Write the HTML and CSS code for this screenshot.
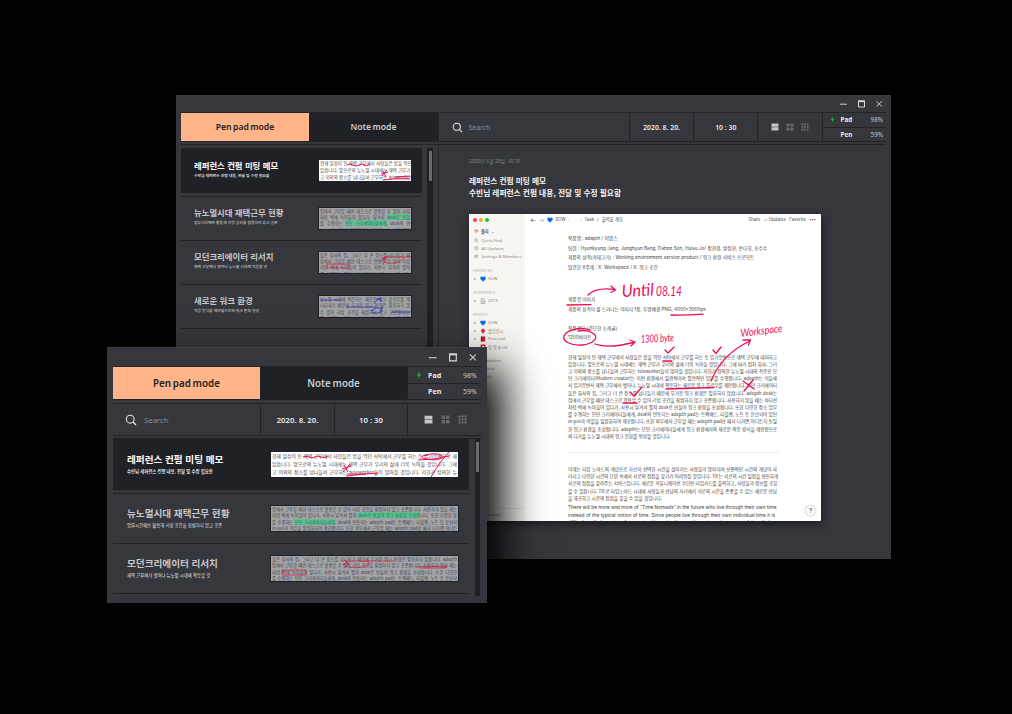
FILE: index.html
```html
<!DOCTYPE html>
<html lang="ko">
<head>
<meta charset="utf-8">
<title>adepth</title>
<link rel="stylesheet" href="styles.css">
</head>
<body>
<svg width="0" height="0" class="defs">
  <symbol id="search" viewBox="0 0 12 12"><circle cx="5.2" cy="5.2" r="3.9" fill="none" stroke="#e6e6e8" stroke-width="1.1"/><path d="M8 8l3 3" stroke="#e6e6e8" stroke-width="1.2"/></symbol>
  <symbol id="v1" viewBox="0 0 8 8"><path d="M.5.6h7v3.200H.5zM.5 4.300h7v3.200H.5z" fill="#c4c4c7"/></symbol>
  <symbol id="v2" viewBox="0 0 8 8"><path d="M.5.5h3.100v3.100H.5zM4.400.5h3.100v3.100H4.400zM.5 4.400h3.100v3.100H.5zM4.400 4.400h3.100v3.100H4.400z" fill="#66676b"/></symbol>
  <symbol id="v3" viewBox="0 0 8 8"><path d="M.5.5h1.700v1.700H.5zM3.150.5h1.700v1.700h-1.700zM5.800.5h1.700v1.700H5.800zM.5 3.150h1.700v1.700H.5zM3.150 3.150h1.700v1.700h-1.700zM5.800 3.150h1.700v1.700H5.800zM.5 5.800h1.700v1.700H.5zM3.150 5.800h1.700v1.700h-1.700zM5.800 5.800h1.700v1.700H5.800z" fill="#737478"/></symbol>
  <symbol id="bolt" viewBox="0 0 6 8"><path d="M3.600.3L.9 4.400h1.900L1.900 7.700 5.100 3.500H3.200z" fill="#12d012"/></symbol>
  <symbol id="ctl" viewBox="0 0 44 8"><path d="M0 4.200h7" stroke="#c8c8ca" stroke-width="1"/><path d="M18.500 1h6v6h-6z" fill="none" stroke="#d8d8da"/><path d="M18 1.300h7" stroke="#d8d8da" stroke-width="1.600"/><path d="M36.500 1.200l5.400 5.400M41.900 1.200l-5.400 5.400" stroke="#c8c8ca" stroke-width="1"/></symbol>
  <symbol id="heart" viewBox="0 0 6 6"><path d="M3 5.700L.4 2.900C-.4 1.200 1.700-.3 3 1.200 4.300-.3 6.400 1.200 5.600 2.900z" fill="#0a6cf0"/></symbol>
</svg>

<section class="window back">
  <header class="titlebar"><svg class="ctl"><use href="#ctl"/></svg></header>
  <div class="bar">
    <div class="tab active"><span>Pen pad mode</span></div>
    <div class="tab"><span>Note mode</span></div>
    <div class="cell search"><svg class="i12"><use href="#search"/></svg><span>Search</span></div>
    <div class="cell date">2020. 8. 20.</div>
    <div class="cell time">10 : 30</div>
    <div class="cell views"><svg><use href="#v1"/></svg><svg><use href="#v2"/></svg><svg><use href="#v3"/></svg></div>
    <div class="power">
      <div><svg><use href="#bolt"/></svg><b>Pad</b><span>98%</span></div>
      <div><b>Pen</b><span>59%</span></div>
    </div>
  </div>
  <div class="content">
    <div class="list">
      <article class="memo selected">
        <div class="txt"><h3>레퍼런스 컨펌 미팅 메모</h3><p>수빈님 레퍼런스 컨펌 내용, 전달 및 수정 필요함</p></div>
        <div class="thumb"><p>현재 일상이 된 재택 근무에서 사람들은 밥을 먹던</p><p>있습니다. 앞으로의 뉴노멀 시대에는 재택 근무가</p><p>고 이외의 장소를 넘나들며 근무하는 teleworker</p>
          <svg viewBox="0 0 92 21" class="ink"><path d="M28 5q3-2 6 0t6 0 5 0 6-1M62 14l7-2M64 11l3 6M68 10l-5 6M64 20q12-2 27-1M76 17l15-1"/></svg></div>
      </article>
      <article class="memo">
        <div class="txt"><h3>뉴노멀시대 재택근무 현황</h3><p>업무시간에만 활용해 리빙 공간을 침범하지 않고 공존</p></div>
        <div class="thumb dim"><p>집에서 근무할 때만 데스크로 활용할 수 있어 리빙</p><p>처럼 벽에 녹아들어 있다가, 당겨서 <mark>desk로 만들</mark></p><p>를 수행하는 <mark>모던 크리에이터들에게,</mark> desk와 연</p><p>in-put과 역할을 일원화하여 제공합니다. 또한 외부</p></div>
      </article>
      <article class="memo">
        <div class="txt"><h3>모던크리에이터 리서치</h3><p>재택 근무에서 벗어나 뉴노멀 시대에 적응할 것</p></div>
        <div class="thumb dim"><p>들은 회사와 집, 그리고 더 큰 장소를 넘나들기 때</p><p>집에서 근무할 때만 데스크로 활용할 수 있어 리빙</p><p>처럼 벽에 녹아들어 있다가, 사용시 당겨서 펼쳐</p><p>를 수행하는 모던 크리에이터들에게, desk와 연동</p>
          <svg viewBox="0 0 92 21" class="ink"><path d="M8 12h22v4H8zM62 9l8-5-5 1 2 5-4-4 6 1M70 5h22M64 10q8 3 18-1l4-4"/></svg></div>
      </article>
      <article class="memo">
        <div class="txt"><h3>새로운 워크 환경</h3><p>적응 방식을 제안함으로써 워크 문화 형성</p></div>
        <div class="thumb dim"><p>뉴노멀 시대에 적응하는 새로운 워크 플로우를 제</p><p>나타내기 때문에 무거운 워크 환경은 필요하지 않</p><p>수 있어 리빙 공간을 침범하지 않고 공존합니다.</p><p>를 수행하는 모던 크리에이터들에게, desk와 연동</p>
          <svg viewBox="0 0 92 21" class="ink blue"><path d="M1 4h22M27 11h30M73 16h19M52 15q5-5 11-2-1 5-8 4-4-1-1-3M55 8q3-6 7-4M57 3l4-1 1 4M61 17l3-7"/></svg></div>
      </article>
    </div>
    <div class="track"><i></i></div>
    <main class="detail">
      <time>2020년 8월 20일&nbsp; 10:30</time>
      <h2>레퍼런스 컨펌 미팅 메모<br>수빈님 레퍼런스 컨펌 내용, 전달 및 수정 필요함</h2>
      <div class="page">
        <aside>
          <div class="lights"><i></i><i></i><i></i></div>
          <p class="me">🐕 <b>홀리</b> ⌄</p>
          <p><svg class="si"><circle cx="2" cy="2" r="1.400"/><path d="M3 3l1.300 1.300"/></svg>Quick Find</p>
          <p><svg class="si"><circle cx="2.200" cy="2.200" r="1.700"/><path d="M2.200 1v1.300h1"/></svg>All Updates</p>
          <p><svg class="si"><circle cx="2.200" cy="2.200" r="1.600"/><circle cx="2.200" cy="2.200" r=".6"/></svg>Settings &amp; Members</p>
          <h6>FAVORITES</h6>
          <p class="n"><em>▸</em><svg class="hi"><use href="#heart"/></svg>SOW</p>
          <h6>WORKSPACE</h6>
          <p class="n"><em>▸</em><svg class="hi" viewBox="0 0 6 6"><path d="M1.200.5h2.400l1.300 1.300v3.700H1.200zM2 3h2M2 4h2" fill="none" stroke="#777" stroke-width=".5"/></svg>2019</p>
          <h6>PRIVATE</h6>
          <p class="n"><em>▸</em><svg class="hi"><use href="#heart"/></svg>SOW</p>
          <p class="n"><em>▸</em><svg class="hi" viewBox="0 0 6 6"><path d="M3 .4q4 2 0 5.200Q-1 2.400 3 .4" fill="#e52a35"/></svg>졸업전시</p>
          <p class="n"><em>▸</em><svg class="hi" viewBox="0 0 6 6"><path d="M.8.5h4.400v5H.8z" fill="#bd1f2a"/><path d="M1.700.5v5" stroke="#65151b" stroke-width=".6"/></svg>Personal</p>
          <p class="n"><em>▸</em><svg class="hi" viewBox="0 0 6 6"><path d="M.6.6h4.800v3.600L3 5.800.6 4.200z" fill="#d7232d"/><path d="M2 2h2v1.500H2z" fill="#fff"/></svg>킹 왕 &amp; UX</p>
          <p class="gap">Templates</p><p>Import</p><p>Trash</p>
          <p class="new">+ &nbsp;New page</p>
        </aside>
        <div class="doc">
          <nav><span class="ar">←</span><span class="ar off">→</span><svg class="hi"><use href="#heart"/></svg><span>SOW</span><span class="off">/ &nbsp; … &nbsp;/</span><span>Task</span><span>/</span><span>출력물 개요</span><span class="sp"></span><span>Share</span><span>✓ Updates</span><span>Favorite</span><span class="dots">•••</span></nav>
          <div class="copy">
            <div class="meta"><p>작품명 : adapth / 어댑스</p><p class="j team">팀원 : Hyunkyung Jang, Junghyun Bang, Dahee Son, Huisu Jo/ 장현경, 방정현, 손다희, 조수수</p><p class="j kind">제품의 성격(카테고리) : Working environment service product / 워크 환경 서비스 프로덕트</p><p>발견한 X주제 : X: Workspace / X: 워크 공간</p></div>
            <div class="meta two"><p>제품컷 이미지</p><p class="j image">제품의 성격이 잘 드러나는 이미지 1장, 투명배경 PNG, 4000*3000px</p></div>
            <div class="meta three"><p>작품개요 (간단한 소개글)</p><p>1200바이트</p></div>
            <div class="body">
              <p>현재 일상이 된 재택 근무에서 사람들은 밥을 먹던 식탁에서 근무를 하는 등 임기응변으로 재택 근무에 대처하고</p>
              <p>있습니다. 앞으로의 뉴노멀 시대에는 재택 근무가 우리의 삶에 더욱 녹아들 것입니다. 그에 따라 점차 회사, 그리</p>
              <p>고 이외의 장소를 넘나들며 근무하는 teleworker들이 많아질 것입니다. 저희가 정의한 뉴노멀 시대의 직종인 모</p>
              <p>던 크리에이터(Modern creator)는 이런 환경에서 일관적이며 필연적인 업무를 수행합니다. adepth는 이들에</p>
              <p class="tight">서 임기응변식 재택 근무에서 벗어나, 뉴노멀 시대에 적응하는 새로운 워크 플로우를 제안합니다. 모던 크리에이터</p>
              <p>들은 회사와 집, 그리고 더 큰 장소를 넘나들기 때문에 무거운 워크 환경은 필요하지 않습니다. adepth desk는</p>
              <p>집에서 근무할 때만 데스크로 활용할 수 있어 리빙 공간을 침범하지 않고 공존합니다. 사용하지 않을 때는 파티션</p>
              <p>처럼 벽에 녹아들어 있다가, 사용시 당겨서 펼쳐 desk로 만들어 워크 환경을 조성합니다. 또한 다양한 장소 업무</p>
              <p>를 수행하는 모던 크리에이터들에게, desk와 연동되는 adepth pad는 트랙패드, 타블렛, 노트 등 분산되어 있던</p>
              <p>in-put과 역할을 일원화하여 제공합니다. 또한 외부에서 근무할 때는 adepth pad만 떼서 나가면 어디든지 동일</p>
              <p>한 워크 환경을 조성합니다. adepth는 모던 크리에이터들에게 워크 환경에서의 새로운 적응 방식을 제안함으로</p>
              <p class="last">써 다가올 뉴노멀 시대의 워크 문화를 형성할 것입니다.</p>
            </div>
            <hr>
            <div class="body second">
              <p>이제는 타임 노마드의 개념으로 자신이 선택한 시간을 살아가는 사람들이 많아지며 보편적인 시간의 개념이 사</p>
              <p>라지고 다양한 시간의 단위 속에서 서로의 접점을 찾기가 어려워질 것입니다. TIE는 서로의 시간 일정을 확인하게</p>
              <p>서로의 접점을 찾아주는 서비스입니다. 새로운 커뮤니케이션 수단인 타임카드를 출력하고, 사람들과 정보를 공유</p>
              <p>할 수 있습니다. TIE로 타임노마드 시대에 사람들과 만남의 자리에서 서로의 시간을 존중할 수 있는 새로운 만남</p>
              <p class="last">을 제공하고 시간의 접점을 찾을 수 있을 것입니다.</p>
            </div>
            <div class="body en">
              <p>There will be more and more of “Time Nomads” in the future who live through their own time</p>
              <p>instead of the typical notion of time. Since people live through their own individual time it is</p>
              <p>difficult to find a point of contact with each other as the universal concept of time fades</p>
            </div>
          </div>
        </div>
        <span class="help">?</span>
        <svg class="notes" viewBox="469 214 352 306">
          <g fill="none" stroke="#f00c55" stroke-width="1.300" stroke-linecap="round" stroke-linejoin="round">
            <path d="M588 295q8-8 27-5.500M611 286l4.500 4-4.500 2.500"/>
            <path d="M567 305l24-.3M671 315q15 .5 32-.8"/>
            <path d="M590 330c-12-4-24 1-26 6s7 10 18 9 17-7 12-11-10-4-16-3"/>
            <path d="M595 344q14 5 38-1.500M630 340l5 2-4 4"/>
            <path d="M665 350l3 3 6-6M713 350l3 3.500 5-6.500M630 392l4 4 8-9"/>
            <path d="M711 381q11-27 39-40M743 340l7.500 0-2 5"/>
            <path d="M743 381l11 8M753 380l-9 11M663 361h9M666 389l48-1.500M623 403h14"/>
          </g>
          <g class="hand">
            <text x="622" y="297" font-size="17" textLength="32" lengthAdjust="spacingAndGlyphs" transform="rotate(-3 622 296)">Until</text>
            <text x="656" y="296" font-size="13" textLength="26" lengthAdjust="spacingAndGlyphs">08.14</text>
            <text x="641" y="343" font-size="11" textLength="33" lengthAdjust="spacingAndGlyphs" transform="rotate(-3 641 343)">1300 byte</text>
            <text x="741" y="337" font-size="11" textLength="42" lengthAdjust="spacingAndGlyphs" transform="rotate(-7 741 337)">Workspace</text>
          </g>
        </svg>
      </div>
    </main>
  </div>
</section>

<section class="window front">
  <header class="titlebar"><svg class="ctl"><use href="#ctl"/></svg></header>
  <div class="bar">
    <div class="tab active"><span>Pen pad mode</span></div>
    <div class="tab"><span>Note mode</span></div>
    <div class="power">
      <div><svg><use href="#bolt"/></svg><b>Pad</b><span>98%</span></div>
      <div><b>Pen</b><span>59%</span></div>
    </div>
  </div>
  <div class="bar lower">
    <div class="cell search"><svg class="i12"><use href="#search"/></svg><span>Search</span></div>
    <div class="cell date">2020. 8. 20.</div>
    <div class="cell time">10 : 30</div>
    <div class="cell views"><svg><use href="#v1"/></svg><svg><use href="#v2"/></svg><svg><use href="#v3"/></svg></div>
  </div>
  <div class="content">
    <div class="list">
      <article class="memo selected">
        <div class="txt"><h3>레퍼런스 컨펌 미팅 메모</h3><p>수빈님 레퍼런스 컨펌 내용, 전달 및 수정 필요함</p></div>
        <div class="thumb"><p>현재 일상이 된 재택 근무에서 사람들은 밥을 먹던 식탁에서 근무를 하는 등 임기응변으로 재</p><p>있습니다. 앞으로의 뉴노멀 시대에는 재택 근무가 우리의 삶에 더욱 녹아들 것입니다. 그에</p><p>고 이외의 장소를 넘나들며 근무하는 teleworker들이 많아질 것입니다. 저희가 정의한 뉴</p>
          <svg viewBox="0 0 187 25" class="ink"><path d="M32 5q3-2 6 0t6 0 6 0 7-1M71 17l9-3M73 13l4 7M79 12l-7 8M76 22q16 1 31-1M75 24l20-2M153 4c6-3 16-3 18 0s-8 5-16 3-3-4 2-4M147 8q16 0 31-4M160 25q8-15 18-25"/></svg></div>
      </article>
      <article class="memo">
        <div class="txt"><h3>뉴노멀시대 재택근무 현황</h3><p>업무시간에만 활용해 리빙 공간을 침범하지 않고 공존</p></div>
        <div class="thumb dim"><p>집에서 근무할 때만 데스크로 활용할 수 있어 리빙 공간을 침범하지 않고 공존합니다. 사용하지 않을 때는</p><p>처럼 벽에 녹아들어 있다가, 사용시 당겨서 펼쳐 <mark>desk로 만들어 워크 환경을 조성합</mark>니다. 또한 다양한 장</p><p>를 수행하는 <mark>모던 크리에이터들에게,</mark> desk와 연동되는 adepth pad는 트랙패드, 타블렛, 노트 등 분산되</p><p>in-put과 역할을 일원화하여 제공합니다. 또한 외부에서 근무할 때는 adepth pad만 떼서 나가면 어디든</p></div>
      </article>
      <article class="memo">
        <div class="txt"><h3>모던크리에이터 리서치</h3><p>재택 근무에서 벗어나 뉴노멀 시대에 적응할 것</p></div>
        <div class="thumb dim"><p>들은 회사와 집, 그리고 더 큰 장소를 넘나들기 때문에 무거운 워크 환경은 필요하지 않습니다. adepth</p><p>집에서 근무할 때만 데스크로 활용할 수 있어 리빙 공간을 침범하지 않고 공존합니다. 사용하지 않을 때는</p><p>처럼 벽에 녹아들어 있다가, 사용시 당겨서 펼쳐 desk로 만들어 워크 환경을 조성합니다. 또한 다양한</p><p>를 수행하는 모던 크리에이터들에게, desk와 연동되는 adepth pad는 트랙패드, 타블렛, 노트 등 분산되</p>
          <svg viewBox="0 0 187 25" class="ink"><path d="M11 14h24v5H11zM73 4l5 5M79 3l-7 6 6-1-4-4M80 5h43M74 10q12 4 24-1 1-5-5-4M145 11l32-1M148 12h27"/></svg></div>
      </article>
    </div>
    <div class="track"><i></i></div>
  </div>
</section>
</body>
</html>
```

FILE: styles.css
```css
* { box-sizing: border-box; }
body { margin: 0; width: 1012px; height: 714px; background: #000; overflow: hidden; position: relative; font-family: "Noto Sans", "Noto Sans CJK KR", sans-serif; color: #e9e9eb; }
h2, h3, h6, p { margin: 0; white-space: nowrap; }
svg { display: block; flex: none; }
.defs { position: absolute; }

.window { position: absolute; background: #36373c; display: flex; flex-direction: column; overflow: hidden; }
.back { left: 176px; top: 95px; width: 715px; height: 464px; border-top: 1px solid #3e3f43; }
.front { left: 107px; top: 347px; width: 380px; height: 256px; border-top: 1px solid #3e3f43; box-shadow: 14px 22px 40px 2px #000; }
.titlebar { display: flex; justify-content: flex-end; align-items: center; flex: none; }
.back .titlebar { height: 16px; padding-right: 7px; }
.front .titlebar { height: 18px; padding-right: 8px; }
.ctl { width: 44px; height: 8px; }
.front .ctl { width: 51px; height: 9px; }

.bar { display: flex; margin: 0 5px; border-top: 1px solid #242529; border-bottom: 1px solid #222327; flex: none; }
.back .bar { height: 30px; }
.front .bar { height: 34px; margin: 0 6px; }
.front .bar.lower { height: 33px; margin-top: 3px; }
.tab { display: flex; align-items: center; justify-content: center; background: #202126; color: #c9c9cc; font-weight: 600; font-size: 8.600px; word-spacing: -.8px; }
.tab.active { background: #ffb48a; color: #25211f; }
.back .tab { width: 128px; }
.back .tab + .tab { width: 129px; }
.front .tab { width: 147px; font-size: 9.800px; }
.cell { display: flex; align-items: center; justify-content: center; border-left: 1px solid #222327; font-weight: 600; font-size: 6.900px; }
.cell.search { justify-content: flex-start; font-weight: 400; color: #8a8b8f; width: 191px; padding-left: 13px; gap: 5.500px; }
.i12 { width: 11px; height: 11px; }
.back .cell.date, .back .cell.time, .back .cell.views { width: 64.200px; }
.views svg { width: 8px; height: 8px; }
.views { gap: 7px; }
.front .cell { font-size: 7.800px; }
.front .cell.search { width: 147px; border-left: 0; padding-left: 12px; gap: 7px; }
.front .cell.date { width: 74px; }
.front .cell.time { width: 73px; }
.front .cell.views { flex: 1; gap: 8px; padding-left: 2px; }
.front .views svg { width: 9px; height: 9px; }
.front .i12 { width: 12px; height: 12px; }
.power { flex: 1; border-left: 1px solid #222327; display: flex; flex-direction: column; font-size: 6.300px; }
.power div { flex: 1; display: flex; align-items: center; padding: 0 3px 0 18px; position: relative; }
.power div + div { border-top: 1px solid #222327; }
.power b { font-weight: 700; }
.power span { margin-left: auto; color: #c2c2c5; }
.power svg { position: absolute; left: 7px; width: 5px; height: 7px; }
.front .power { font-size: 7.100px; }
.front .power div { padding: 0 4px 0 20px; }
.front .power svg { left: 8px; width: 6px; height: 8px; }

.content { display: flex; flex: 1; min-height: 0; border-top: 1px solid #222327; }
.back .content { margin: 2px 5px 0; }
.front .content { margin: 2px 6px 0; }
.list { flex: none; }
.back .list { width: 241px; padding-top: 3px; }
.front .list { width: 356px; }
.memo { display: flex; align-items: center; justify-content: space-between; border-bottom: 1px solid #222327; padding-left: 13px; padding-right: 11px; }
.back .memo { height: 44.200px; }
.front .memo { height: 50.600px; padding-left: 14px; }
.memo.selected { background: #202126; border-bottom: 0; }
.back .memo.selected { height: 45px; }
.front .memo.selected { height: 51px; }
.memo.selected + .memo { border-top: 1px solid #222327; margin-top: 3px; }
.back .memo.selected + .memo { height: 45px; margin-top: 2.500px; }
.txt { color: #c6c6ca; }
.txt h3 { font: 700 8.400px/10px "Noto Sans CJK KR", sans-serif; }
.txt p { font: 500 3.820px/6px "Noto Sans CJK KR", sans-serif; margin-top: 3px; }
.back .txt { padding-bottom: 3px; }
.front .txt { padding-bottom: 2px; }
.selected .txt { color: #fff; }
.front .txt h3 { font-size: 9.600px; line-height: 12px; }
.front .txt p { font-size: 4.350px; margin-top: 3px; }
.thumb { position: relative; overflow: hidden; background: #fff; width: 92px; height: 21px; color: #4a4a4a; padding: 0 1px; }
.thumb p { font: 400 4.500px/6.900px "Noto Sans CJK KR", sans-serif; text-align: justify; text-align-last: justify; }
.front .thumb { width: 187px; height: 25px; }
.front .thumb p { font-size: 4.900px; line-height: 7.800px; }
.thumb.dim { background: #a3a4a8; color: #404146; outline: 1px solid #202126; }
.thumb.dim p { font-size: 4.200px; line-height: 6.400px; }
.front .thumb.dim p { font-size: 4.250px; line-height: 6.500px; }
.thumb mark { background: #5fbf93; color: #1c7550; }
.ink { position: absolute; inset: 0; width: 100%; height: 100%; fill: none; stroke: #f00c55; stroke-width: 1; }
.dim .ink { stroke: #cf2346; stroke-width: .8; }
.dim .ink.blue { stroke: #3429b0; }
.track { background: #1f2024; width: 6px; margin-left: 5px; flex: none; }
.back .track { margin-top: 3px; }
.track i { display: block; width: 3px; height: 30px; margin: 3px auto; background: #6b6c70; }
.front .track { width: 5px; margin-left: 6px; height: 157px; }

.detail { flex: 1; margin-left: 5px; border-left: 1px solid #222327; padding: 11px 0 0 30px; min-width: 0; }
.detail time { display: block; font: 400 5px/9px "Noto Sans CJK KR", sans-serif; color: #808185; }
.detail h2 { font: 700 7.700px/12px "Noto Sans CJK KR", sans-serif; margin-top: 10px; color: #f4f4f5; }
.page { position: relative; display: flex; width: 352px; height: 306.500px; margin-top: 15px; background: #fff; border-radius: 1px; overflow: hidden; box-shadow: 1px 3px 8px rgba(0,0,0,.5); color: #444; }
aside { width: 56px; background: #f7f6f3; color: #8b8985; position: relative; padding: 4px 0 0 4px; flex: none; font-size: 4.200px; }
aside p { display: flex; align-items: center; height: 8.200px; padding-left: 1px; }
aside h6 { font: 400 3.300px/4px Inter, sans-serif; letter-spacing: .2px; margin: 7.800px 0 2px; color: #aaa8a4; }
.lights { display: flex; gap: 2px; margin-bottom: 5px; }
.lights i { width: 4px; height: 4px; border-radius: 50%; background: #f6413a; }
.lights i + i { background: #f6ae1f; }
.lights i + i + i { background: #17c62c; }
.me { color: #666; gap: 2px; margin-bottom: 1px; }
.si { width: 5px; height: 5px; margin-right: 2.500px; fill: none; stroke: #99978f; stroke-width: .6; }
.hi { width: 6px; height: 6px; margin-right: 2px; }
.n em { font-style: normal; width: 6px; font-size: 4px; }
aside .gap { margin-top: 5px; }
aside .gap, aside .gap ~ p { padding-left: 8px; }
aside .new { position: absolute; bottom: 0; left: 0; width: 56px; height: 13px; border-top: 1px solid #e8e6e2; }
.doc { flex: 1; min-width: 0; }
.doc nav { display: flex; align-items: center; gap: 3px; height: 12px; padding: 0 5px; font: 400 4.300px/8px Inter, "Noto Sans CJK KR", sans-serif; }
.doc nav .hi { margin-right: -1px; }
.doc nav .sp { flex: 1; }
.doc nav span + .dots { font-size: 4px; margin-left: 1px; }
.doc nav .sp ~ span { margin-left: .6px; }
.doc nav .ar { font-size: 6px; }
.doc nav .off { color: #aaa; }
.copy { padding: 8px 0 0 43px; }
.meta p { font: 400 4.700px/9.500px Inter, "Noto Sans CJK KR", sans-serif; height: 9.500px; }
.meta .j { text-align: justify; text-align-last: justify; font-size: 4.650px; }
.meta .team { width: 199px; }
.meta .kind { width: 186px; }
.meta .image { width: 136px; }
.two { margin-top: 23px; }
.three { margin-top: 9.500px; }
.body { margin-top: 11px; }
.body p { width: 209px; height: 7.210px; font: 400 4.600px/7.210px "Noto Sans CJK KR", sans-serif; text-align: justify; text-align-last: justify; letter-spacing: -.03px; }
.body .tight { letter-spacing: -.1px; }
.body .last { text-align-last: left; }
hr { border: 0; border-top: 1px solid #eee; width: 211px; margin: 12px 0 0; }
.second { margin-top: 13px; }
.body.en { margin-top: 2.500px; }
.body.en p { font: 400 4.850px/7.210px Inter, sans-serif; width: 207px; }
.help { position: absolute; right: 5px; bottom: 5px; width: 11px; height: 11px; border: .5px solid #ddd; border-radius: 50%; box-shadow: 0 0 2px #ccc; text-align: center; font: 500 6px/10px Inter, sans-serif; }
.notes { position: absolute; inset: 0; width: 352px; height: 306px; }
.hand text { fill: #f00c55; font-family: Lato, sans-serif; font-style: italic; font-weight: 400; }
```
